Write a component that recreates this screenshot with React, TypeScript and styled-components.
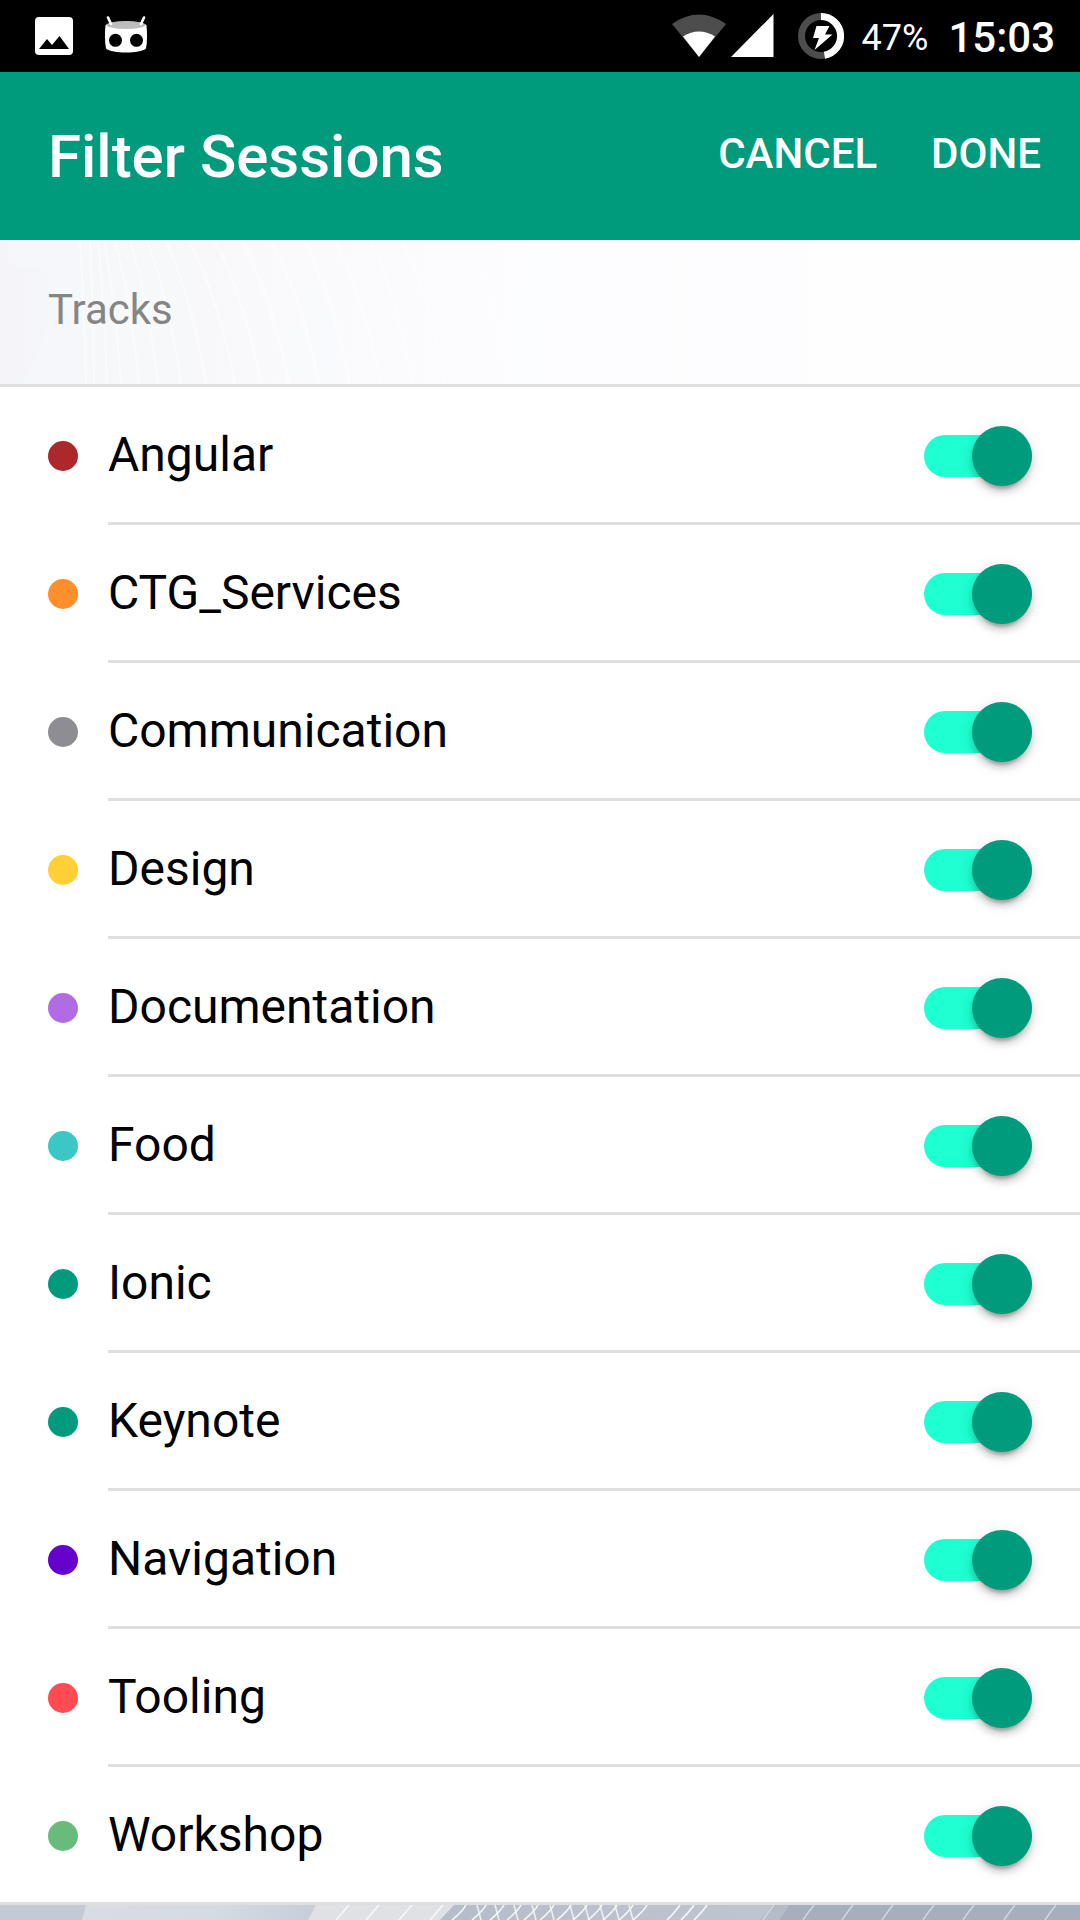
import React, { useState } from "react";
import styled, { createGlobalStyle } from "styled-components";

const GREEN = "#009b7c";

const GlobalStyle = createGlobalStyle`
  *, *::before, *::after { box-sizing: border-box; }
  html, body { margin: 0; padding: 0; background: #fff; }
  body { font-family: Roboto, "Noto Sans", sans-serif; overflow: hidden; }
`;

const Screen = styled.div`
  width: 1080px;
  height: 1920px;
  display: flex;
  flex-direction: column;
  overflow: hidden;
  background: #fff;
`;

const StatusBar = styled.div`
  flex: none;
  height: 72px;
  padding: 0 25px 0 35px;
  display: flex;
  align-items: center;
  justify-content: space-between;
  background: #000;
  color: #fff;
`;

const StatusGroup = styled.div`
  display: flex;
  align-items: center;
  height: 72px;
`;

const Glyph = styled.svg<{ $gap?: number }>`
  display: block;
  flex: none;
  margin-left: ${(p) => p.$gap ?? 0}px;
`;

const BatteryLevel = styled.span`
  margin-left: 18px;
  padding-top: 3px;
  font-size: 36px;
  line-height: 42px;
`;

const Clock = styled.span`
  margin-left: 20px;
  padding-top: 4px;
  font-size: 42px;
  line-height: 48px;
  font-weight: 500;
`;

const Toolbar = styled.header`
  flex: none;
  height: 168px;
  padding: 2px 39px 0 48px;
  display: flex;
  align-items: center;
  justify-content: space-between;
  background: ${GREEN};
  color: #fff;
`;

const Title = styled.h1`
  margin: 0;
  font-size: 60px;
  line-height: 72px;
  font-weight: 500;
`;

const Actions = styled.div`
  display: flex;
  gap: 54px;
  padding-bottom: 6px;
`;

const Action = styled.button`
  padding: 0;
  border: 0;
  background: none;
  color: inherit;
  font: 500 42px/48px Roboto, "Noto Sans", sans-serif;
  text-transform: uppercase;
`;

const ListHeader = styled.div`
  flex: none;
  height: 147px;
  display: grid;
  align-items: center;
  border-bottom: 3px solid #dedede;
  > * { grid-area: 1 / 1; }
`;

const HeaderLabel = styled.h2`
  margin: 0;
  padding: 0 0 4px 48px;
  font-size: 42px;
  line-height: 48px;
  font-weight: 400;
  color: #858585;
`;

const List = styled.ul`
  flex: none;
  margin: 0;
  padding: 0;
  list-style: none;
  border-bottom: 3px solid #dedede;
`;

const Dot = styled.span<{ $color: string }>`
  flex: none;
  width: 30px;
  height: 30px;
  border-radius: 50%;
  background: ${(p) => p.$color};
`;

const Row = styled.li`
  height: 138px;
  padding-left: 48px;
  display: flex;
  align-items: center;
  gap: 30px;
  &:last-child { height: 135px; }
  &:last-child ${Dot} { margin-top: 3px; }
`;

const RowBody = styled.div<{ $last: boolean }>`
  flex: 1;
  height: 100%;
  padding-right: 48px;
  display: flex;
  align-items: center;
  justify-content: space-between;
  border-bottom: ${(p) => (p.$last ? "0" : "3px solid #dedede")};
`;

const Name = styled.span`
  font-size: 48px;
  line-height: 56px;
  color: #000;
`;

const Toggle = styled.button<{ $on: boolean }>`
  width: 108px;
  height: 60px;
  padding: 0;
  border: 0;
  margin-top: 3px;
  display: grid;
  grid-template-columns: 108px;
  align-items: center;
  justify-items: ${(p) => (p.$on ? "end" : "start")};
  background: none;
  > * { grid-area: 1 / 1; }
`;

const Rail = styled.span<{ $on: boolean }>`
  width: 108px;
  height: 42px;
  border-radius: 21px;
  background: ${(p) => (p.$on ? "#1effd2" : "#dedede")};
`;

const Knob = styled.span`
  width: 60px;
  height: 60px;
  border-radius: 50%;
  background: ${GREEN};
  box-shadow: 0 6px 6px 0 rgba(0, 0, 0, 0.14), 0 9px 3px -6px rgba(0, 0, 0, 0.2),
    0 3px 15px 0 rgba(0, 0, 0, 0.12);
`;

const tracks = [
  { name: "Angular", color: "#ac282b" },
  { name: "CTG_Services", color: "#ff8e2d" },
  { name: "Communication", color: "#8e8d93" },
  { name: "Design", color: "#fed035" },
  { name: "Documentation", color: "#b16be3" },
  { name: "Food", color: "#3bc7c4" },
  { name: "Ionic", color: GREEN },
  { name: "Keynote", color: GREEN },
  { name: "Navigation", color: "#6600cc" },
  { name: "Tooling", color: "#fe4c52" },
  { name: "Workshop", color: "#69bb7b" },
];

/* Top x, bottom x of each fine strand behind the section header. */
const strands: [number, number][] = [
  [80, 86], [90, 94], [98, 107], [104, 121], [115, 139], [130, 158],
  [147, 181], [166, 206], [189, 235], [215, 261], [242, 289], [271, 319],
  [304, 350], [335, 381], [371, 412], [402, 445], [437, 479], [468, 510],
  [502, 545],
];

const HeaderArt = () => (
  <Glyph width="1080" height="144" viewBox="0 0 1080 144" aria-hidden="true">
    <defs>
      <linearGradient id="haze">
        <stop offset="0" stopColor="#f5f5f9" />
        <stop offset="0.12" stopColor="#f6f8fa" />
        <stop offset="0.22" stopColor="#f9f8fb" />
        <stop offset="0.5" stopColor="#fdfcfe" />
        <stop offset="1" stopColor="#fffeff" />
      </linearGradient>
    </defs>
    <rect width="1080" height="144" fill="url(#haze)" />
    <path d="M8 0H80L86 144H24L46 92V30L8 24Z" fill="#f5f8fb" opacity="0.7" />
    <path d="M305 30L270 144H330L340 90Z" fill="#f8fafd" opacity="0.6" />
    <path d="M524 0H562L544 144H507Z" fill="#fafdff" opacity="0.6" />
    {strands.map(([a, b]) => (
      <path key={a} d={`M${a} 0Q${a + (b - a) * 0.65} 60 ${b} 144`} fill="none" stroke="#fff" strokeWidth="1.8" opacity="0.55" />
    ))}
  </Glyph>
);

const FooterArt = () => (
  <Glyph width="1080" height="15" viewBox="0 0 1080 15" aria-hidden="true">
    <defs>
      <linearGradient id="ground" gradientUnits="userSpaceOnUse" x1="0" y1="0" x2="1080" y2="0">
        <stop offset="0" stopColor="#d9dee2" />
        <stop offset="0.2" stopColor="#d5dbe2" />
        <stop offset="0.29" stopColor="#c7ced8" />
      </linearGradient>
      <linearGradient id="dusk">
        <stop offset="0" stopColor="#b5bdc9" />
        <stop offset="1" stopColor="#c0c6cf" />
      </linearGradient>
    </defs>
    <rect width="1080" height="15" fill="url(#ground)" />
    <path d="M0 0H86L82 15H0Z" fill="#c3cad4" />
    <path d="M316 0H460L440 15H308Z" fill="#dfe1e6" />
    <path d="M454 0H800V15H440Z" fill="url(#dusk)" />
    <path d="M789 0H1080V15H779Z" fill="#a7afbc" />
    <path d="M772 0L760 15H779L789 0Z" fill="#b5bcc8" />
    <g fill="none" stroke="#f6f8fa" strokeWidth="1.6">
      {[349, 379, 412, 443].map((x) => <path key={x} d={`M${x} 0L${x - 13} 15`} />)}
      {[466, 486, 504, 521, 538, 554, 571, 587, 602, 617, 633, 647].map((x) => (
        <path key={x} d={`M${x} 0Q${x - 3} 6 ${x - 14} 15`} />
      ))}
      {[477, 495, 514, 532, 550, 570, 585, 600, 615, 629].map((x) => (
        <path key={x} d={`M${x} 0L${x + 4} 15`} opacity="0.85" />
      ))}
      {[680, 694, 707].map((x) => <path key={x} d={`M${x} 0Q${x - 4} 6 ${x - 13} 15`} />)}
    </g>
    <g fill="none" stroke="#d2d8df" strokeWidth="1.5">
      {[774, 814, 853, 893, 934, 974, 1015, 1056].map((x) => (
        <path key={x} d={`M${x} 0Q${x - 5} 6 ${x - 11} 15`} />
      ))}
    </g>
  </Glyph>
);

const PictureIcon = () => (
  <Glyph width="38" height="38" viewBox="0 0 38 38">
    <rect width="38" height="38" rx="4" fill="#fff" />
    <path d="M4 32L12 22L17 28L24.5 19L34 32Z" />
  </Glyph>
);

const RobotIcon = () => (
  <Glyph $gap={31} width="44" height="40" viewBox="0 0 44 40">
    <path d="M1.5 9C9 4.500 35 4.500 42.5 9C43.3 17 43.3 26 42 32.500C36 37.800 8 37.800 2 32.500C.7 26 .7 17 1.500 9Z" fill="#fff" />
    <ellipse cx="22" cy="9" rx="19.500" ry="4" fill="#bdbdbd" />
    <path d="M4 1.500L7 8M40 1.500L37 8" stroke="#fff" strokeWidth="2.600" strokeLinecap="round" />
    <circle cx="11.500" cy="24.300" r="6.500" />
    <circle cx="32.500" cy="24.300" r="6.500" />
  </Glyph>
);

const WifiIcon = () => (
  <Glyph width="54" height="44" viewBox="0 0 54 44">
    <path d="M0 10Q27 -9 54 10L27 43Z" fill="#4d4d4d" />
    <path d="M11 22.500Q27 12.500 43 22.500L27 43Z" fill="#fff" />
  </Glyph>
);

const SignalIcon = () => (
  <Glyph $gap={5} width="43" height="44" viewBox="0 0 43 44">
    <path d="M0 43L42.500 0V43Z" fill="#fff" />
  </Glyph>
);

const BatteryIcon = () => (
  <Glyph $gap={24} width="46" height="46" viewBox="0 0 46 46">
    <circle cx="23" cy="23" r="19.500" fill="none" stroke="#4d4d4d" strokeWidth="7" />
    <path d="M23 3.500A19.500 19.500 0 0 1 26.500 42.200" fill="none" stroke="#fff" strokeWidth="7" />
    <path d="M18.500 13H31.500L27 21.500H34.500L16.500 37L21 25H15Z" fill="#fff" />
  </Glyph>
);

export default function App() {
  const [off, setOff] = useState<string[]>([]);
  const flip = (name: string) =>
    setOff((prev) => (prev.includes(name) ? prev.filter((n) => n !== name) : [...prev, name]));

  return (
    <Screen>
      <GlobalStyle />
      <StatusBar>
        <StatusGroup>
          <PictureIcon />
          <RobotIcon />
        </StatusGroup>
        <StatusGroup>
          <WifiIcon />
          <SignalIcon />
          <BatteryIcon />
          <BatteryLevel>47%</BatteryLevel>
          <Clock>15:03</Clock>
        </StatusGroup>
      </StatusBar>
      <Toolbar>
        <Title>Filter Sessions</Title>
        <Actions>
          <Action>Cancel</Action>
          <Action>Done</Action>
        </Actions>
      </Toolbar>
      <ListHeader>
        <HeaderArt />
        <HeaderLabel>Tracks</HeaderLabel>
      </ListHeader>
      <List>
        {tracks.map((t, i) => {
          const on = !off.includes(t.name);
          return (
            <Row key={t.name}>
              <Dot $color={t.color} />
              <RowBody $last={i === tracks.length - 1}>
                <Name>{t.name}</Name>
                <Toggle
                  $on={on}
                  role="switch"
                  aria-checked={on}
                  aria-label={t.name}
                  onClick={() => flip(t.name)}
                >
                  <Rail $on={on} />
                  <Knob />
                </Toggle>
              </RowBody>
            </Row>
          );
        })}
      </List>
      <FooterArt />
    </Screen>
  );
}
